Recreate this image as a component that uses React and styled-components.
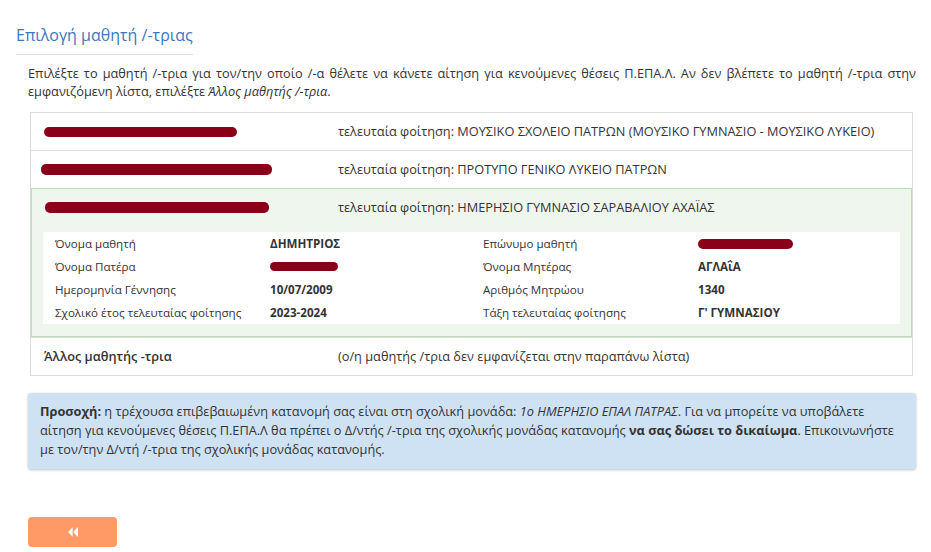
import styled, { createGlobalStyle } from "styled-components";

const GlobalStyle = createGlobalStyle`
  body {
    margin: 0;
    background: #ffffff;
    font-family: "Open Sans", "Noto Sans", sans-serif;
    font-size: 12.75px;
    color: #333333;
  }
`;

const Page = styled.div`
  padding: 24px 15px 5px 16px;
  width: 900px;
`;

const Title = styled.h3`
  display: inline-block;
  margin: 0;
  padding: 0 0 8px 0;
  font-family: "Open Sans", "Noto Sans", sans-serif;
  font-weight: 400;
  font-size: 16px;
  line-height: 22px;
  color: #3a78c0;
  border-bottom: 1px solid #dddddd;
`;

const Section = styled.div`
  margin-left: 12px;
  width: 888px;
`;

const Intro = styled.p`
  margin: 9px 0 12px 0;
  line-height: 18px;
  text-align: justify;
`;

const List = styled.div`
  margin: 0 3px 0 2px;
  border: 1px solid #dddddd;
`;

const Item = styled.div`
  border-top: ${(p) => (p.$first ? "none" : "1px solid #dddddd")};
  background: ${(p) => (p.$active ? "#eff6ee" : "#ffffff")};
  outline: ${(p) => (p.$active ? "1px solid #b9dcb9" : "none")};
  outline-offset: -1px;
  padding: ${(p) => (p.$active ? "9px 12px 13px 12px" : "9px 13px")};
`;

const Line = styled.div`
  display: grid;
  grid-template-columns: 294px 1fr;
  align-items: center;
  line-height: 19px;
  padding-left: ${(p) => (p.$indent ? "1px" : "0")};
`;

const Redact = styled.span`
  display: block;
  height: ${(p) => p.$h || 10}px;
  width: ${(p) => p.$w}px;
  margin-left: ${(p) => p.$x || 0}px;
  background: #8a0019;
  border-radius: 5px;
`;

const NameLabel = styled.span`
  font-weight: 600;
`;

const Details = styled.div`
  margin-top: 15px;
  background: #ffffff;
  display: grid;
  grid-template-columns: 227px 213px 215px 1fr;
`;

const Cell = styled.div`
  padding: 2px 0 2px ${(p) => (p.$pad ? "12px" : "0")};
  line-height: 19px;
  font-size: 11.6px;
  font-weight: ${(p) => (p.$bold ? 700 : 400)};
  color: #333333;
  display: flex;
  align-items: center;
`;

const Alert = styled.div`
  margin-top: 17px;
  background: #cfe2f3;
  border-radius: 3px;
  box-shadow: 0 1px 3px rgba(0, 0, 0, 0.25);
  padding: 9px 12px 10px 12px;
  line-height: 19px;
`;

const Footer = styled.div`
  margin-top: 48px;
`;

const BackButton = styled.button`
  width: 89px;
  height: 30px;
  border: none;
  border-radius: 4px;
  background: #ff9966;
  display: flex;
  align-items: center;
  justify-content: center;
  cursor: pointer;
  padding: 0;
`;

function BackIcon() {
  return (
    <svg width="12" height="12" viewBox="0 0 12 12">
      <path d="M6 1 L1 6 L6 11 Z" fill="#ffffff" />
      <path d="M11 1 L6 6 L11 11 Z" fill="#ffffff" />
      <rect x="5.6" y="1" width="0.9" height="10" fill="#ff9966" />
    </svg>
  );
}

const details = [
  ["Όνομα μαθητή", "ΔΗΜΗΤΡΙΟΣ", "Επώνυμο μαθητή", null],
  ["Όνομα Πατέρα", null, "Όνομα Μητέρας", "ΑΓΛΑΐΑ"],
  ["Ημερομηνία Γέννησης", "10/07/2009", "Αριθμός Μητρώου", "1340"],
  ["Σχολικό έτος τελευταίας φοίτησης", "2023-2024", "Τάξη τελευταίας φοίτησης", "Γ' ΓΥΜΝΑΣΙΟΥ"],
];

export default function App() {
  return (
    <>
      <GlobalStyle />
      <Page>
        <Title>Επιλογή μαθητή /-τριας</Title>
        <Section>
          <Intro>
            Επιλέξτε το μαθητή /-τρια για τον/την οποίο /-α θέλετε να κάνετε
            αίτηση για κενούμενες θέσεις Π.ΕΠΑ.Λ. Αν δεν βλέπετε το μαθητή /-τρια
            στην εμφανιζόμενη λίστα, επιλέξτε <i>Άλλος μαθητής /-τρια</i>.
          </Intro>
          <List>
            <Item $first>
              <Line>
                <Redact $w={193} $x={0} />
                <span>
                  τελευταία φοίτηση: ΜΟΥΣΙΚΟ ΣΧΟΛΕΙΟ ΠΑΤΡΩΝ (ΜΟΥΣΙΚΟ ΓΥΜΝΑΣΙΟ -
                  ΜΟΥΣΙΚΟ ΛΥΚΕΙΟ)
                </span>
              </Line>
            </Item>
            <Item>
              <Line>
                <Redact $w={231} $x={-3} $h={11} />
                <span>τελευταία φοίτηση: ΠΡΟΤΥΠΟ ΓΕΝΙΚΟ ΛΥΚΕΙΟ ΠΑΤΡΩΝ</span>
              </Line>
            </Item>
            <Item $active>
              <Line $indent>
                <Redact $w={224} $x={1} $h={11} />
                <span>τελευταία φοίτηση: ΗΜΕΡΗΣΙΟ ΓΥΜΝΑΣΙΟ ΣΑΡΑΒΑΛΙΟΥ ΑΧΑΪΑΣ</span>
              </Line>
              <Details>
                {details.map((r) => (
                  <>
                    <Cell $pad>{r[0]}</Cell>
                    <Cell $bold>{r[1] ?? <Redact $w={68} $h={9} />}</Cell>
                    <Cell>{r[2]}</Cell>
                    <Cell $bold>{r[3] ?? <Redact $w={95} $h={10} />}</Cell>
                  </>
                ))}
              </Details>
            </Item>
            <Item>
              <Line>
                <NameLabel>Άλλος μαθητής -τρια</NameLabel>
                <span>(ο/η μαθητής /τρια δεν εμφανίζεται στην παραπάνω λίστα)</span>
              </Line>
            </Item>
          </List>
          <Alert>
            <b>Προσοχή:</b> η τρέχουσα επιβεβαιωμένη κατανομή σας είναι στη
            σχολική μονάδα: <i>1ο ΗΜΕΡΗΣΙΟ ΕΠΑΛ ΠΑΤΡΑΣ</i>. Για να μπορείτε να
            υποβάλετε αίτηση για κενούμενες θέσεις Π.ΕΠΑ.Λ θα πρέπει ο Δ/ντής
            /-τρια της σχολικής μονάδας κατανομής <b>να σας δώσει το δικαίωμα</b>.
            Επικοινωνήστε με τον/την Δ/ντή /-τρια της σχολικής μονάδας
            κατανομής.
          </Alert>
          <Footer>
            <BackButton>
              <BackIcon />
            </BackButton>
          </Footer>
        </Section>
      </Page>
    </>
  );
}
